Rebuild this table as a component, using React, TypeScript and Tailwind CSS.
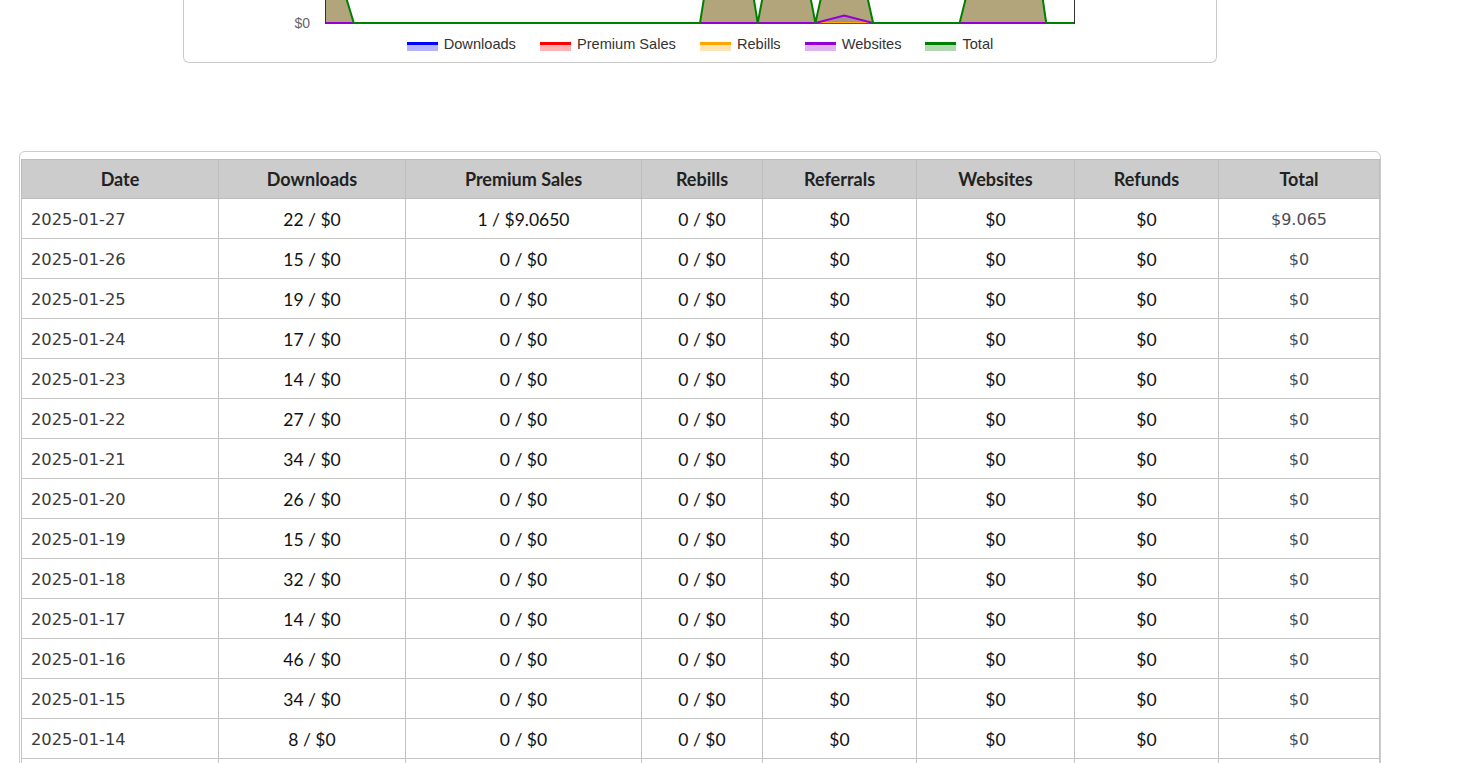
import React from "react";

const sans = "font-['Liberation_Sans',Arial,sans-serif]";
const verd = "font-['DejaVu_Sans',Verdana,sans-serif]";
const cal = "font-['Lato','Noto_Sans',sans-serif]";

const X0 = 141;
const X1 = 891;
const BASE = 23;
const step = (X1 - X0) / 26;

// px above the base line, one per day
const totals = [95, 0, 0, 0, 0, 0, 0, 0, 0, 0, 0, 0, 0, 0, 180, 0, 150, 0, 130, 0, 0, 0, 0, 115, 200, 0, 0];
const websites = totals.map((_, i) => (i === 18 ? 7.5 : 0));

const pts = (vals: number[]) =>
  vals.map((v, i) => `${(X0 + i * step).toFixed(1)},${(BASE - v).toFixed(1)}`).join(" ");

const legend = [
  { label: "Downloads", line: "bg-[#0000ff]", fill: "bg-[#b3b3ff]" },
  { label: "Premium Sales", line: "bg-[#ff0000]", fill: "bg-[#ffb3b3]" },
  { label: "Rebills", line: "bg-[#ffa500]", fill: "bg-[#ffe4b3]" },
  { label: "Websites", line: "bg-[#9400d3]", fill: "bg-[#dfb3f2]" },
  { label: "Total", line: "bg-[#008000]", fill: "bg-[#b3d9b3]" },
];

const rows: [string, number, string][] = [
  ["2025-01-27", 22, "1 / $9.0650"],
  ["2025-01-26", 15, "0 / $0"],
  ["2025-01-25", 19, "0 / $0"],
  ["2025-01-24", 17, "0 / $0"],
  ["2025-01-23", 14, "0 / $0"],
  ["2025-01-22", 27, "0 / $0"],
  ["2025-01-21", 34, "0 / $0"],
  ["2025-01-20", 26, "0 / $0"],
  ["2025-01-19", 15, "0 / $0"],
  ["2025-01-18", 32, "0 / $0"],
  ["2025-01-17", 14, "0 / $0"],
  ["2025-01-16", 46, "0 / $0"],
  ["2025-01-15", 34, "0 / $0"],
  ["2025-01-14", 8, "0 / $0"],
  ["2025-01-13", 21, "0 / $0"],
  ["2025-01-12", 18, "0 / $0"],
];

const cols = [
  { name: "Date", w: "w-[197px]" },
  { name: "Downloads", w: "w-[187px]" },
  { name: "Premium Sales", w: "w-[236px]" },
  { name: "Rebills", w: "w-[121px]" },
  { name: "Referrals", w: "w-[154px]" },
  { name: "Websites", w: "w-[158px]" },
  { name: "Refunds", w: "w-[144px]" },
  { name: "Total", w: "w-[161px]" },
];

const ChartCard = () => (
  <div className="ml-[183px] w-[1034px] border-x border-b border-[#cccccc] rounded-b-[6px] bg-white">
    <svg width={1032} height={25} className="block overflow-visible">
      <line x1={X0} y1={BASE + 0.5} x2={X1} y2={BASE + 0.5} stroke="#555" strokeWidth={1} />
      <polygon points={`${X0},${BASE} ${pts(totals)} ${X1},${BASE}`} fill="#b3a57b" />
      <polygon points={`${X0},${BASE} ${pts(websites)} ${X1},${BASE}`} fill="#a68f8b" />
      <line x1={X0 + 17 * step} y1={BASE - 0.5} x2={X0 + 19 * step} y2={BASE - 0.5} stroke="#ffa500" strokeWidth={1} />
      <polyline points={pts(websites)} fill="none" stroke="#9400d3" strokeWidth={2} />
      <polyline points={pts(totals)} fill="none" stroke="#008000" strokeWidth={2} strokeLinejoin="round" />
      <line x1={X0 + 0.5} y1={-40} x2={X0 + 0.5} y2={BASE + 1} stroke="#333" strokeWidth={1} />
      <line x1={X1 - 0.5} y1={-40} x2={X1 - 0.5} y2={BASE + 1} stroke="#333" strokeWidth={1} />
      <text
        x={126}
        y={BASE + 5}
        textAnchor="end"
        fontFamily="'Liberation Sans', Arial, sans-serif"
        fontSize={14}
        fill="#666"
      >
        $0
      </text>
    </svg>
    <div className={`mt-[10px] h-[20px] flex items-center justify-center gap-[24px] ${sans} text-[14.6px] text-[#333]`}>
      {legend.map((l) => (
        <div key={l.label} className="flex items-center gap-[6px]">
          <div className="mt-[3px] w-[31px] flex flex-col">
            <div className={`h-[3px] ${l.line}`} />
            <div className={`h-[6px] ${l.fill}`} />
          </div>
          <span>{l.label}</span>
        </div>
      ))}
    </div>
    <div className="h-[7px]" />
  </div>
);

const td = "border border-[#c4c4c4] h-[40px] p-0 pt-[3px] text-center align-middle";

const StatsTable = () => (
  <div className="mt-[88px] ml-[19px] w-[1362px] border border-[#cccccc] rounded-[6px] pt-[7px] pl-[1px] overflow-hidden">
    <table className="table-fixed border-collapse w-[1358px]">
      <colgroup>
        {cols.map((c) => (
          <col key={c.name} className={c.w} />
        ))}
      </colgroup>
      <thead>
        <tr className="bg-[#cccccc]">
          {cols.map((c) => (
            <th
              key={c.name}
              className={`border border-[#bdbdbd] h-[39px] p-0 text-center align-middle ${cal} font-bold text-[18px] text-[#222]`}
            >
              {c.name}
            </th>
          ))}
        </tr>
      </thead>
      <tbody className={`${cal} text-[17.5px] text-[#111]`}>
        {rows.map(([date, dl, prem], i) => (
          <tr key={date}>
            <td className={`${td} text-left pl-[9px] ${verd} text-[16.3px] text-[#3a3a3a]`}>{date}</td>
            <td className={td}>{dl} / $0</td>
            <td className={td}>{prem}</td>
            <td className={td}>0 / $0</td>
            <td className={td}>$0</td>
            <td className={td}>$0</td>
            <td className={td}>$0</td>
            <td className={`${td} ${verd} text-[16px] text-[#474d57]`}>{i === 0 ? "$9.065" : "$0"}</td>
          </tr>
        ))}
      </tbody>
    </table>
  </div>
);

export default function App() {
  return (
    <div className="min-h-screen bg-white pb-10">
      <ChartCard />
      <StatsTable />
    </div>
  );
}
